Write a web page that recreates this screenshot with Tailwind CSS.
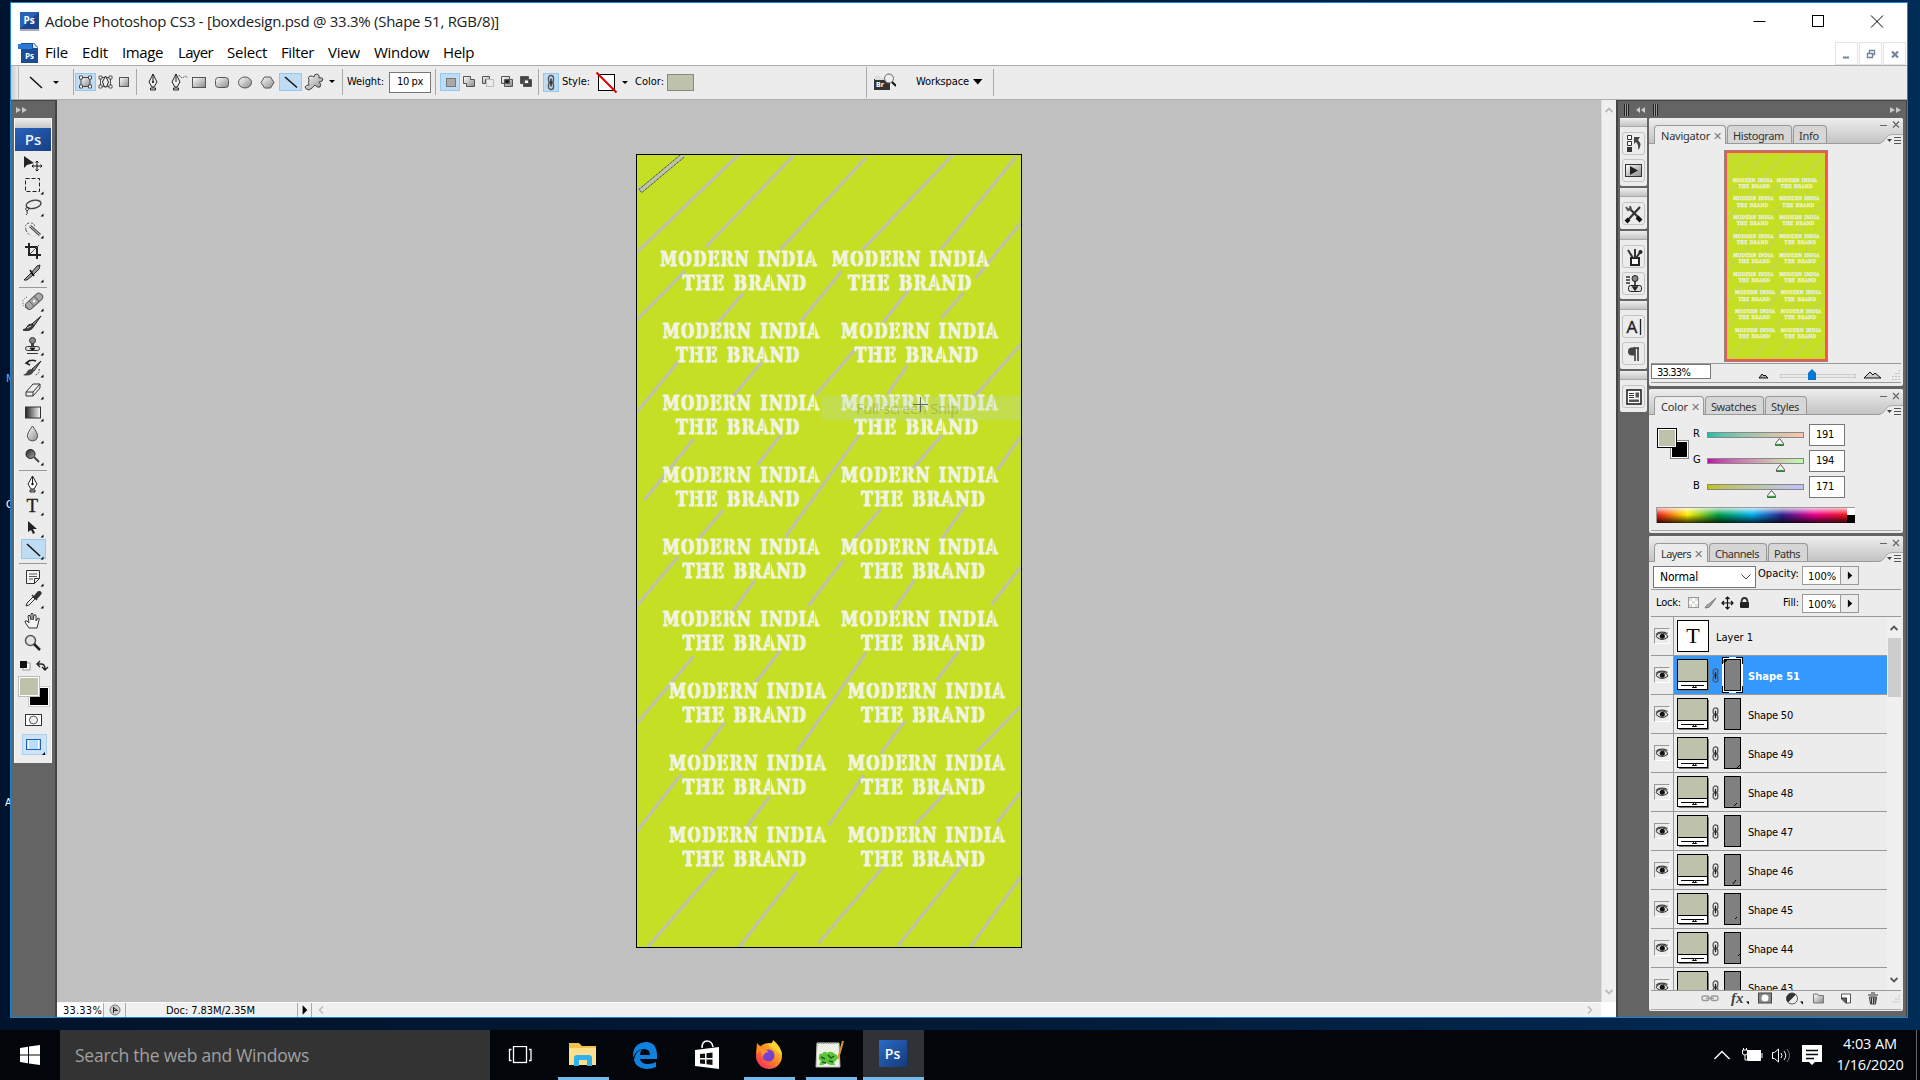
<!DOCTYPE html>
<html lang="en">
<head>
<meta charset="utf-8">
<title>Adobe Photoshop CS3</title>
<script src="https://cdn.jsdelivr.net/npm/@tailwindcss/browser@4"></script>
</head>
<body class="relative w-[1920px] h-[1080px] overflow-hidden bg-linear-to-r from-[#00132c] via-[#001a38] to-[#002c58] font-['DejaVu_Sans_Condensed','DejaVu_Sans',sans-serif] text-[11px] text-black">

<svg class="absolute size-0">
  <defs>
    <linearGradient id="gray" x1="0" y1="0" x2="1" y2="1"><stop offset="0" stop-color="#fff"/><stop offset="1" stop-color="#8a8a8a"/></linearGradient>
    <linearGradient id="bw"><stop offset="0" stop-color="#222"/><stop offset="1" stop-color="#fff"/></linearGradient>
    <linearGradient id="dk" x1="0" y1="0" x2="1" y2="1"><stop offset="0" stop-color="#222"/><stop offset="1" stop-color="#aaa"/></linearGradient>
    <linearGradient id="ff" x1="1" y1="0" x2="0" y2="1"><stop offset="0" stop-color="#ffe14a"/><stop offset=".45" stop-color="#ff8a1f"/><stop offset="1" stop-color="#f5156c"/></linearGradient>
    <symbol id="chain" viewBox="0 0 8 16"><g fill="none" stroke="#555" stroke-width="1.4"><rect x="1.5" y="1" width="5" height="7" rx="2.5"/><rect x="1.5" y="8" width="5" height="7" rx="2.5"/><path d="M4 4v8" stroke="#222"/></g></symbol>
    <symbol id="eye" viewBox="0 0 14 12"><path d="M1 6.5Q3 2.5 7.5 3T13 7Q10 9.500 7 9.500T1 6.500z" fill="#ddd" stroke="#333" stroke-width="1"/><circle cx="7.300" cy="6.300" r="2.500" fill="#111"/><path d="M1 4.500Q5 .5 12.500 3.500" stroke="#444" fill="none" stroke-width="1.200"/></symbol>
    <symbol id="arrR" viewBox="0 0 12 8"><path d="M0 1l5 3-5 3zM6 1l5 3-5 3z" fill="#c8c8c8"/></symbol>
    <symbol id="flyout" viewBox="0 0 24 10"><path d="M0 10Q4 9 7 4 9 .5 13 .5H24V10z" fill="#ececec"/><path d="M0 9.500Q4 9 7 4 9 .5 13 .5H24" fill="none" stroke="#aaa"/><path d="M8 5h5l-2.500 3z" fill="#444"/><path d="M15 3.500h7M15 6.500h7M15 9.500h7" stroke="#555"/></symbol>
  </defs>
</svg>

<!-- desktop labels partly behind the window -->
<div class="absolute left-[6px] top-[371px] text-[#6bb0e8] leading-4">M</div>
<div class="absolute left-[6px] top-[497px] text-white leading-4">C</div>
<div class="absolute left-[5px] top-[795px] text-white leading-4">A</div>

<!-- application window -->
<div class="absolute left-[10px] top-[2px] w-[1898px] h-[1016px] border border-[#1883d7] bg-white flex flex-col">
  <div class="h-[37px] shrink-0 flex items-center text-[15px] text-[#222] font-['Open_Sans',sans-serif]">
    <svg class="ml-[9px] w-[19px] h-[19px]" viewBox="0 0 19 19"><rect width="19" height="17" fill="#2a62b8"/><path d="M0 17L19 0v17z" fill="#1c4590"/><rect y="17" width="19" height="2" fill="#aab"/><text x="3.500" y="12" font-size="10" font-weight="bold" fill="#fff" font-family="Open Sans">Ps</text></svg>
    <span class="ml-[6px] whitespace-nowrap" data-w="454">Adobe Photoshop CS3 - [boxdesign.psd @ 33.3% (Shape 51, RGB/8)]</span>
    <svg class="ml-auto mr-[22px] w-[132px] h-[14px]" viewBox="0 0 132 14" fill="none" stroke="#000"><path d="M.5 6.500h12M118 .5l12 12M130 .5l-12 12"/><rect x="59.500" y=".5" width="11" height="11"/></svg>
  </div>
  <div class="h-[25px] shrink-0 flex items-center text-[15px] font-['Open_Sans',sans-serif]">
    <svg class="ml-[7px] w-[20px] h-[20px]" viewBox="0 0 20 20"><path d="M3 0h13l4 4v16H3z" fill="#1c4c94"/><path d="M0 1h14v5H0z" fill="#2a79d8"/><path d="M15 0v5h5z" fill="#dde6f2"/><text x="7" y="16" font-size="8" font-weight="bold" fill="#fff" font-family="Open Sans">Ps</text></svg>
    <div class="flex ml-[7px] whitespace-nowrap">
      <span class="w-[37px]"><span data-w="23">File</span></span><span class="w-[40px]"><span data-w="26">Edit</span></span><span class="w-[56px]"><span data-w="41">Image</span></span><span class="w-[49px]"><span data-w="35">Layer</span></span><span class="w-[54px]"><span data-w="40">Select</span></span><span class="w-[47px]"><span data-w="33">Filter</span></span><span class="w-[46px]"><span data-w="32">View</span></span><span class="w-[69px]"><span data-w="55">Window</span></span><span data-w="31">Help</span>
    </div>
    <div class="ml-auto flex gap-px mr-px mt-[2px]">
      <div class="size-[23px] border border-[#e4e4e4]"><svg viewBox="0 0 21 21"><path d="M7 14.500h6" stroke="#72859b" stroke-width="2"/></svg></div>
      <div class="size-[23px] border border-[#e4e4e4]"><svg viewBox="0 0 21 21"><path d="M7.500 10.500h5v4h-5zM9.500 10V7.500h5v4H13" stroke="#72859b" fill="none" stroke-width="1.400"/></svg></div>
      <div class="size-[23px] border border-[#e4e4e4]"><svg viewBox="0 0 21 21"><path d="M8 8.500l6 6M14 8.500l-6 6" stroke="#72859b" stroke-width="2.200"/></svg></div>
    </div>
  </div>

  <!-- options bar -->
  <div class="h-[35px] shrink-0 bg-[#ececec] border-y border-[#adadad] flex items-center pb-px whitespace-nowrap [&>svg]:shrink-0">
    <div class="w-[8px] h-[33px] mb-[-1px] bg-linear-to-r from-[#c8c8c8] to-[#eee] border-r border-[#bbb]"></div>
    <svg class="w-[54px] h-[33px]" viewBox="0 0 54 33"><path d="M11 11l12 11" stroke="#111" stroke-width="1.500"/><path d="M34 15h6l-3 3z"/></svg>
    <div class="w-px h-[26px] bg-[#aaa]"></div>
    <div class="w-[21px] h-[18px] ml-[1px] bg-[#c0dcf3] border border-[#90c8f6]"><svg viewBox="0 0 19 16"><path d="M5 3.500h9v9H5z" fill="url(#gray)" stroke="#444"/><path d="M3.500 2h3v3h-3zM12.500 2h3v3h-3zM3.500 11h3v3h-3zM12.500 11h3v3h-3z" fill="#fff" stroke="#333" stroke-width=".8"/></svg></div>
    <svg class="w-[19px] h-[18px]" viewBox="0 0 19 18"><path d="M4.500 4.500h10v9h-10z" fill="none" stroke="#555"/><path d="M3 3h3v3H3zM13 3h3v3h-3zM3 12h3v3H3zM13 12h3v3h-3z" fill="#fff" stroke="#333" stroke-width=".8"/><path d="M9.500 3l3 6-2 5h-2l-2-5z" fill="#eee" stroke="#222"/></svg>
    <svg class="w-[20px] h-[18px]" viewBox="0 0 20 18"><rect x="4.500" y="4.500" width="9" height="9" fill="url(#gray)" stroke="#555"/></svg>
    <div class="w-px h-[26px] bg-[#aaa] ml-px"></div>
    <svg class="w-[32px] h-[22px]" viewBox="0 0 32 22"><path d="M16 3l4 8-3 5h-2l-3-5zM16 3v8M13.500 17h5v2h-5z" fill="#eee" stroke="#222"/><circle cx="16" cy="11" r="1"/></svg>
    <svg class="w-[22px] h-[22px]" viewBox="0 0 22 22"><path d="M7 3l4 8-3 5H6l-3-5zM7 3v8M4.500 17h5v2h-5z" fill="#eee" stroke="#222"/><path d="M10 4q2 4 5 2t3 1" fill="none" stroke="#444" stroke-dasharray="1.500 1"/></svg>
    <svg class="w-[87px] h-[22px]" viewBox="0 0 87 22" fill="url(#gray)" stroke="#555"><rect x="1.500" y="6.500" width="13" height="10"/><rect x="24.500" y="6.500" width="13" height="10" rx="3"/><ellipse cx="54" cy="11.500" rx="6.500" ry="5.500"/><path d="M73.500 6h6l3.500 5.500-3.500 5.500h-6L70 11.500z"/></svg>
    <div class="w-[23px] h-[18px] ml-[1px] bg-[#c0dcf3] border border-[#90c8f6]"><svg viewBox="0 0 21 16"><path d="M5 3l12 10.500" stroke="#111" stroke-width="1.500"/></svg></div>
    <svg class="w-[40px] h-[22px]" viewBox="0 0 40 22"><path d="M7 9q-2-3 1-4 3 0 4 1 0-3 3-3 3 1 2 4 3-1 4 1 0 3-4 3 3 2 1 5-3 1-5-2-2 3-6 5-4-1-4-3 1-2 4-2-1-2 0-5z" fill="url(#gray)" stroke="#444"/><path d="M27 9h6l-3 3z"/></svg>
    <div class="w-px h-[26px] bg-[#aaa]"></div>
    <span class="ml-[4px] w-[42px]"><span data-w="37">Weight:</span></span>
    <div class="w-[42px] h-[21px] mb-[-1px] bg-white border border-[#777] flex items-center justify-center"><span data-w="26">10 px</span></div>
    <div class="w-px h-[26px] bg-[#aaa] ml-[4px]"></div>
    <div class="w-[20px] h-[18px] ml-[4px] bg-[#c0dcf3] border border-[#90c8f6]"><svg viewBox="0 0 18 16"><rect x="5.500" y="4.500" width="9" height="8" fill="#aaa" stroke="#777"/></svg></div>
    <svg class="w-[77px] h-[18px]" viewBox="0 0 77 18" stroke="#555" fill="url(#gray)"><path d="M3.500 3.500h7v3h4v7h-8v-3h-3z"/><path d="M22.500 10.500v-7h7v3h-4v4z"/><path d="M26.500 6.500h7v7h-7z" fill="none" stroke="#bbb"/><path d="M41.500 3.500h8v7h-8zM44.500 6.500h8v7h-8z"/><path d="M45 7h4v3h-4z" fill="#000"/><path d="M60.500 3.500h8v7h-8zM63.500 6.500h8v7h-8z" fill="#444"/><path d="M64.500 7h4v3.500h-4z" fill="#fff"/></svg>
    <div class="w-px h-[26px] bg-[#aaa] ml-[1px]"></div>
    <div class="w-[16px] h-[19px] ml-[4px] bg-[#c0dcf3] border border-[#90c8f6] flex justify-center"><svg class="w-[8px] h-[17px]"><use href="#chain"/></svg></div>
    <span class="ml-[3px] w-[34px]"><span data-w="28">Style:</span></span>
    <svg class="w-[36px] h-[24px]" viewBox="0 0 36 24"><rect x="2.500" y="4.500" width="16" height="16" fill="#fff" stroke="#000"/><path d="M.5 2.500l20 20" stroke="#e00000" stroke-width="2"/><path d="M26 11h6l-3 3z"/></svg>
    <span class="ml-[3px] w-[32px]"><span data-w="29">Color:</span></span>
    <div class="w-[27px] h-[17px] bg-[#bfc2ab] border border-[#888]"></div>
    <div class="w-px h-[31px] bg-[#aaa] ml-[172px]"></div>
    <svg class="w-[22px] h-[18px] ml-[7px]" viewBox="0 0 22 18"><path d="M0 6h16v11H0z" fill="#333"/><path d="M1 3h5l1 2h9v2H1z" fill="#ddd"/><circle cx="15" cy="5.500" r="4.500" fill="#eee" stroke="#666"/><path d="M18 9l4 4" stroke="#111" stroke-width="2"/><text x="2" y="14" font-size="7" font-weight="bold" fill="#fff">Br</text></svg>
    <span class="ml-[20px] w-[57px]"><span data-w="53">Workspace</span></span>
    <svg class="w-[10px] h-[6px]" viewBox="0 0 10 6"><path d="M0 0h9.500L4.800 5.500z"/></svg>
    <div class="w-px h-[27px] bg-[#aaa] ml-[10px]"></div>
  </div>

  <div class="flex-1 min-h-0 flex">
    <!-- tool dock -->
    <div class="w-[46px] shrink-0 bg-[#646464] border-r-2 border-t border-[#444] flex flex-col pl-[3px]">
      <svg class="w-[12px] h-[8px] ml-[2px] mt-[5px] mb-[4px] shrink-0"><use href="#arrR"/></svg>
      <div class="w-[38px] h-[645px] bg-[#ececec] border-x border-[#f8f8f8] flex flex-col">
        <div class="h-[10px] bg-linear-to-b from-[#eee] to-[#c8c8c8] shrink-0"></div>
        <div class="h-[23px] shrink-0 bg-linear-to-br from-[#2a62bc] to-[#173f86] text-[#e8f2ff] text-[15px] font-semibold font-['Open_Sans',sans-serif] flex items-center justify-center">Ps</div>
        <div id="tools" class="flex flex-col items-center pt-px"></div>
        <svg class="w-[36px] h-[108px]" viewBox="15 654 36 108">
          <rect x="23" y="663" width="7" height="7" fill="#fff" stroke="#999"/><rect x="20" y="661" width="7" height="7" fill="#111"/>
          <path d="M38 664h3q4 0 4 5M40 661l-3 3 3 3M42 667l3 3 3-3" fill="none" stroke="#222" stroke-width="1.400"/>
          <rect x="28.500" y="686.500" width="21" height="20" fill="#000" stroke="#ccc"/><rect x="29.500" y="687.500" width="19" height="18" fill="none" stroke="#fff"/>
          <rect x="18.500" y="676.500" width="21" height="20" fill="#fff" stroke="#bbb"/><rect x="20" y="678" width="18" height="17" fill="#bfc2ab"/>
          <rect x="25.500" y="714.500" width="16" height="11" fill="#fff" stroke="#333"/><circle cx="33.500" cy="720" r="4" fill="#eee" stroke="#555"/>
          <rect x="22.500" y="734.500" width="24" height="20" fill="#cfe3f5" stroke="#a8d0f0"/><rect x="26.500" y="739.500" width="14" height="10" fill="#b9dcff" stroke="#1565c0"/><path d="M28.500 740v9M38.500 740v9" stroke="#fff"/><path d="M45 752v3h-3z"/>
        </svg>
      </div>
    </div>

    <!-- document area -->
    <div class="flex-1 min-w-0 flex flex-col">
      <div class="flex-1 min-h-0 flex">
        <div class="flex-1 bg-[#c0c0c0] pl-[579px] pt-[54px]">
          <svg class="w-[386px] h-[794px]" viewBox="0 0 386 794"><g class="artwork"></g>
            <g transform="translate(-11 -9) scale(.3333)"><path d="M42 133L168 28M50 143L178 36M42 133l8 10" stroke="#2a2f9a" stroke-width="3" stroke-dasharray="4 2" fill="none"/></g>
            <rect x="186" y="242" width="199" height="24" fill="#bcdcb0" opacity=".3"/>
            <text x="220" y="260" font-size="14.500" fill="#8fa321" opacity=".5" font-family="Open Sans" textLength="103">Full-screen Snip</text>
            <path d="M277 250.500h15M284.500 243v15" stroke="#5f6f50"/>
            <rect x=".5" y=".5" width="385" height="793" fill="none" stroke="#000"/>
          </svg>
        </div>
        <div class="w-[15px] bg-[#f0f0f0] border-l border-[#ddd] flex flex-col justify-between items-center py-[7px]">
          <svg class="w-[8px] h-[6px]" viewBox="0 0 8 6"><path d="M.5 5L4 1.500 7.500 5" fill="none" stroke="#bbb" stroke-width="1.800"/></svg>
          <svg class="w-[8px] h-[6px]" viewBox="0 0 8 6"><path d="M.5 1L4 4.500 7.500 1" fill="none" stroke="#bbb" stroke-width="1.800"/></svg>
        </div>
      </div>
      <div class="h-[15px] flex items-center bg-[#f0f0f0] border-t border-[#fafafa]">
        <div class="w-[47px] h-full bg-white border-r border-[#aaa] pl-[6px] leading-[16px]"><span data-w="39">33.33%</span></div>
        <div class="w-[22px] h-full border-r border-[#aaa] flex justify-center items-center"><svg class="w-[12px] h-[12px]" viewBox="0 0 12 12"><circle cx="6" cy="6" r="5" fill="#ccc" stroke="#777"/><path d="M4.500 3v6M4.500 3.500l4 3-4 0" stroke="#222" fill="none"/></svg></div>
        <div class="w-[172px] h-full border-r border-[#aaa] pl-[40px] leading-[16px]"><span data-w="89">Doc: 7.83M/2.35M</span></div>
        <svg class="w-[14px] h-[14px] border-r border-[#aaa]" viewBox="0 0 14 14"><path d="M5 2l5 5-5 5z"/></svg>
        <svg class="w-[6px] h-[8px] ml-[6px]" viewBox="0 0 6 8"><path d="M5 .5L1.500 4 5 7.500" fill="none" stroke="#bbb" stroke-width="1.500"/></svg>
        <svg class="w-[6px] h-[8px] ml-auto mr-[8px]" viewBox="0 0 6 8"><path d="M1 .5L4.500 4 1 7.500" fill="none" stroke="#bbb" stroke-width="1.500"/></svg>
        <div class="w-[15px] h-full bg-white"></div>
      </div>
    </div>

    <!-- panel dock -->
    <div class="w-[291px] shrink-0 bg-[#646464] border-l-2 border-r border-t border-[#444] flex flex-col">
      <div class="h-[17px] shrink-0 flex items-center px-[6px]">
        <svg class="w-[36px] h-[12px]" viewBox="0 0 36 12"><path d="M.5 0v12M2.500 0v12M4.500 0v12M29.500 0v12M31.500 0v12M33.500 0v12" stroke="#222"/><path d="M1.500 0v12M3.500 0v12M30.500 0v12M32.500 0v12" stroke="#999"/><path d="M16 3l-4 3 4 3zM21 3l-4 3 4 3z" fill="#ccc"/></svg>
        <svg class="w-[12px] h-[8px] ml-auto mr-[-2px]"><use href="#arrR"/></svg>
      </div>
      <div class="flex flex-1 min-h-0">
        <div id="strip" class="w-[27px] ml-[2px] flex flex-col gap-[2px]"></div>
        <div class="w-[254px] ml-[2px] flex flex-col gap-[3px]">

          <!-- navigator -->
          <div class="h-[268px] bg-[#ececec] rounded-[2px] flex flex-col">
            <div class="h-[26px] shrink-0 bg-linear-to-b from-[#eee] to-[#c4c4c4] border-b border-[#9a9a9a] rounded-t-[2px] flex items-end pl-[5px] gap-px font-['Noto_Sans',sans-serif] text-[#333]">
              <div class="w-[72px] h-[19px] mb-[-1px] bg-[#ececec] border border-b-0 border-[#999] rounded-t-[4px] pl-[6px] leading-[20px] whitespace-nowrap flex gap-[3px]"><span data-w="49">Navigator</span><span class="text-[#777]">✕</span></div>
              <div class="w-[65px] h-[18px] bg-[#d6d6d6] border border-b-0 border-[#999] rounded-t-[4px] pl-[5px] leading-[20px]"><span data-w="51">Histogram</span></div>
              <div class="w-[34px] h-[18px] bg-[#d6d6d6] border border-b-0 border-[#999] rounded-t-[4px] pl-[5px] leading-[20px]"><span data-w="20">Info</span></div>
              <svg class="w-[24px] h-[26px] ml-auto mb-[-1px]" viewBox="0 0 24 26"><path d="M1 7.500h7M14 3.500l6 6M20 3.500l-6 6" stroke="#666" stroke-width="1.200"/><use href="#flyout" y="16" width="24" height="10"/></svg>
            </div>
            <div class="flex-1 flex justify-center pt-[6px] pr-[1px]"><div class="w-[104px] h-[212px] border border-[#888] bg-[#ff5050] p-[2px]"><svg class="w-[98px] h-[206px]" viewBox="2 2 382 790" preserveAspectRatio="none"><g class="artwork"></g></svg></div></div>
            <div class="h-[20px] mx-[2px] border-t border-[#999] border-b flex items-start">
              <div class="w-[60px] h-[15px] bg-white border border-[#777] pl-[5px] leading-[16px]"><span data-w="33">33.33%</span></div>
              <svg class="w-[190px] h-[16px]" viewBox="1711 365 190 16"><path d="M1759 379l3-4 2 2 1-1 3 3z" fill="#aaa" stroke="#111"/><rect x="1780.500" y="375.500" width="75" height="3" fill="#e7eaea" stroke="#ccc"/><path d="M1808 381v-7l4-4 4 4v7z" fill="#0078d7"/><path d="M1864 379l6-6 3 3 2-2 6 5z" fill="#ccc" stroke="#111"/><path d="M1899 371v10M1896 374v7M1893 377v4" stroke="#999" stroke-dasharray="1 2"/></svg>
            </div>
            <div class="h-[3px]"></div>
          </div>

          <!-- color -->
          <div class="h-[144px] bg-[#ececec] rounded-[2px] flex flex-col">
            <div class="h-[26px] shrink-0 bg-linear-to-b from-[#eee] to-[#c4c4c4] border-b border-[#9a9a9a] rounded-t-[2px] flex items-end pl-[5px] gap-px font-['Noto_Sans',sans-serif] text-[#333]">
              <div class="w-[50px] h-[19px] mb-[-1px] bg-[#ececec] border border-b-0 border-[#999] rounded-t-[4px] pl-[6px] leading-[19px] whitespace-nowrap flex gap-[3px]"><span data-w="27">Color</span><span class="text-[#777]">✕</span></div>
              <div class="w-[59px] h-[18px] bg-[#d6d6d6] border border-b-0 border-[#999] rounded-t-[4px] pl-[5px] leading-[19px]"><span data-w="45">Swatches</span></div>
              <div class="w-[42px] h-[18px] bg-[#d6d6d6] border border-b-0 border-[#999] rounded-t-[4px] pl-[5px] leading-[19px]"><span data-w="28">Styles</span></div>
              <svg class="w-[24px] h-[26px] ml-auto mb-[-1px]" viewBox="0 0 24 26"><path d="M1 7.500h7M14 4l6 6M20 4l-6 6" stroke="#666" stroke-width="1.200"/><use href="#flyout" y="16" width="24" height="10"/></svg>
            </div>
            <div class="flex h-[85px] pt-[9px] pl-[8px] shrink-0">
              <svg class="w-[36px] h-[36px]" viewBox="0 0 36 36"><rect x="13.500" y="16.500" width="18" height="18" fill="#000" stroke="#888"/><rect x="14.500" y="17.500" width="16" height="16" fill="none" stroke="#fff"/><rect x=".5" y="4.500" width="19" height="19" fill="#bfc2ab" stroke="#000"/><rect x="1.500" y="5.500" width="17" height="17" fill="none" stroke="#fff"/></svg>
              <div class="flex flex-col gap-[4px]">
                <div class="flex h-[22px]"><span class="w-[14px] leading-[20px]">R</span>
                  <div class="w-[97px] pt-[8px]"><div class="h-[6px] border border-[#888] bg-linear-to-r from-[#00c2ab] to-[#ffc2ab]"></div><svg class="w-[9px] h-[8px] ml-[68px]" viewBox="0 0 9 8"><path d="M4.500.5l4 5v2h-8v-2z" fill="#fff" stroke="#555"/><path d="M1 6.500h7" stroke="#3a3" stroke-width="1.500"/></svg></div>
                  <div class="w-[36px] h-[22px] ml-[5px] bg-white border border-[#777] pl-[6px] leading-[19px]"><span data-w="18">191</span></div></div>
                <div class="flex h-[22px]"><span class="w-[14px] leading-[20px]">G</span>
                  <div class="w-[97px] pt-[8px]"><div class="h-[6px] border border-[#888] bg-linear-to-r from-[#bf00ab] to-[#bfffab]"></div><svg class="w-[9px] h-[8px] ml-[69px]" viewBox="0 0 9 8"><path d="M4.500.5l4 5v2h-8v-2z" fill="#fff" stroke="#555"/><path d="M1 6.500h7" stroke="#3a3" stroke-width="1.500"/></svg></div>
                  <div class="w-[36px] h-[22px] ml-[5px] bg-white border border-[#777] pl-[6px] leading-[19px]"><span data-w="18">194</span></div></div>
                <div class="flex h-[22px]"><span class="w-[14px] leading-[20px]">B</span>
                  <div class="w-[97px] pt-[8px]"><div class="h-[6px] border border-[#888] bg-linear-to-r from-[#bfc200] to-[#bfc2ff]"></div><svg class="w-[9px] h-[8px] ml-[60px]" viewBox="0 0 9 8"><path d="M4.500.5l4 5v2h-8v-2z" fill="#fff" stroke="#555"/><path d="M1 6.500h7" stroke="#3a3" stroke-width="1.500"/></svg></div>
                  <div class="w-[36px] h-[22px] ml-[5px] bg-white border border-[#777] pl-[6px] leading-[19px]"><span data-w="18">171</span></div></div>
              </div>
            </div>
            <div class="flex ml-[7px] mt-[7px] w-[199px] h-[16px] border-t border-l border-[#999]">
              <div class="w-[190px] bg-[linear-gradient(to_bottom,rgba(255,255,255,.75),transparent_45%,rgba(0,0,0,.8)),linear-gradient(to_right,#f01818,#fff000_16%,#00a040_32%,#00b0f0_50%,#302090_66%,#f00090_83%,#f01818)]"></div>
              <div class="w-[8px] bg-[linear-gradient(#fff_50%,#000_50%)]"></div>
            </div>
            <div class="mt-[7px] mx-[2px] h-px bg-[#aaa]"></div>
          </div>

          <!-- layers -->
          <div class="h-[475px] bg-[#ececec] rounded-[2px] flex flex-col">
            <div class="h-[26px] shrink-0 bg-linear-to-b from-[#eee] to-[#c4c4c4] border-b border-[#9a9a9a] rounded-t-[2px] flex items-end pl-[5px] gap-px font-['Noto_Sans',sans-serif] text-[#333]">
              <div class="w-[54px] h-[19px] mb-[-1px] bg-[#ececec] border border-b-0 border-[#999] rounded-t-[4px] pl-[6px] leading-[19px] whitespace-nowrap flex gap-[3px]"><span data-w="30">Layers</span><span class="text-[#777]">✕</span></div>
              <div class="w-[58px] h-[18px] bg-[#d6d6d6] border border-b-0 border-[#999] rounded-t-[4px] pl-[5px] leading-[19px]"><span data-w="44">Channels</span></div>
              <div class="w-[40px] h-[18px] bg-[#d6d6d6] border border-b-0 border-[#999] rounded-t-[4px] pl-[5px] leading-[19px]"><span data-w="26">Paths</span></div>
              <svg class="w-[24px] h-[26px] ml-auto mb-[-1px]" viewBox="0 0 24 26"><path d="M1 7.500h7M14 4l6 6M20 4l-6 6" stroke="#666" stroke-width="1.200"/><use href="#flyout" y="16" width="24" height="10"/></svg>
            </div>
            <div class="h-[28px] shrink-0 mx-[2px] pl-[2px] pt-[4px] border-b border-[#999] flex">
              <div class="w-[103px] h-[22px] bg-white border border-[#777] pl-[6px] pr-[4px] flex items-center justify-between text-[12px]"><span data-w="38">Normal</span><svg class="w-[10px] h-[6px]" viewBox="0 0 10 6"><path d="M.5.5L5 5 9.500.5" fill="none" stroke="#444"/></svg></div>
              <span class="ml-[2px] w-[44px] leading-[16px]"><span data-w="41">Opacity:</span></span>
              <div class="w-[57px] h-[19px] border border-[#999] bg-white flex"><span class="w-[39px] pl-[5px] leading-[19px] border-r border-[#999]"><span data-w="28">100%</span></span><svg class="w-[17px] h-[17px] bg-[#ececec]" viewBox="0 0 17 17"><path d="M7 4.500l4.500 4L7 12.500z"/></svg></div>
            </div>
            <div class="h-[27px] shrink-0 mx-[2px] pl-[5px] pt-[4px] border-b border-[#999] flex">
              <span class="w-[31px] leading-[17px]"><span data-w="25">Lock:</span></span>
              <svg class="w-[66px] h-[16px] mt-px" viewBox="0 0 66 16"><rect x="1.500" y="2.500" width="10" height="10" fill="#fff" stroke="#999"/><path d="M2 3h3v3H2zM8 3h3v3H8zM5 6h3v3H5zM2 9h3v3H2zM8 9h3v3H8z" fill="#ddd"/><path d="M29 3l-7 6q-3 1-4 4 5 0 6-3z" fill="#aaa" stroke="#777"/><path d="M40.500 2v12M35 8h11M38.500 4l2-2 2 2M38.500 12l2 2 2-2M37 6l-2 2 2 2M44 6l2 2-2 2" stroke="#111" fill="none" stroke-width="1.200"/><rect x="53" y="7" width="9" height="6" rx="1" fill="#222"/><path d="M54.500 7.500q0-4.500 3-4.500t3 4.500" fill="none" stroke="#333" stroke-width="1.800"/></svg>
              <span class="ml-[27px] w-[22px] leading-[17px] text-right pr-[3px]"><span data-w="16">Fill:</span></span>
              <div class="w-[57px] h-[19px] border border-[#999] bg-white flex"><span class="w-[39px] pl-[5px] leading-[19px] border-r border-[#999]"><span data-w="28">100%</span></span><svg class="w-[17px] h-[17px] bg-[#ececec]" viewBox="0 0 17 17"><path d="M7 4.500l4.500 4L7 12.500z"/></svg></div>
            </div>
            <div class="h-[374px] shrink-0 mx-[2px] flex border-b border-[#999]">
              <div id="layers" class="w-[236px] overflow-hidden"></div>
              <div class="w-[14px] bg-[#f0f0f0] flex flex-col items-center">
                <svg class="w-[8px] h-[6px] mt-[8px]" viewBox="0 0 8 6"><path d="M.5 5L4 1.500 7.500 5" fill="none" stroke="#555" stroke-width="1.800"/></svg>
                <div class="mt-[7px] w-[13px] h-[59px] bg-[#cdcdcd] shrink-0"></div>
                <svg class="w-[8px] h-[6px] mt-auto mb-[7px]" viewBox="0 0 8 6"><path d="M.5 1L4 4.500 7.500 1" fill="none" stroke="#555" stroke-width="1.800"/></svg>
              </div>
            </div>
            <svg class="w-[254px] h-[18px] shrink-0" viewBox="1649 990.5 254 18">
              <g fill="none" stroke="#999" stroke-width="1.300"><rect x="1702" y="995.500" width="7" height="4.500" rx="2"/><rect x="1711" y="995.500" width="7" height="4.500" rx="2"/><path d="M1706 997.800h8"/></g>
              <text x="1731" y="1002" font-size="15" font-style="italic" font-weight="bold" fill="#444" font-family="Liberation Serif">fx</text><path d="M1746 1001h3v3zM1800 1001h3v3z"/>
              <rect x="1758.500" y="992.500" width="13" height="10" fill="#888" stroke="#444"/><circle cx="1765" cy="997.500" r="3.500" fill="#fff"/>
              <circle cx="1792" cy="998" r="5.500" fill="#eee" stroke="#555"/><path d="M1788.100 1001.900a5.500 5.500 0 0 1 7.800-7.800z" fill="#333"/>
              <path d="M1813.500 1002.500v-9h4l1 1.500h5v7.500z" fill="url(#gray)" stroke="#777"/>
              <path d="M1841.500 993.500h9v9h-5l-4-4z" fill="#fff" stroke="#555"/><path d="M1841.500 997.500h5v5z" fill="#666" stroke="#333"/>
              <path d="M1869.500 996.500h7l-1 7h-5zM1868 994.500h10M1871 992.500h4M1871.500 997v6M1873.500 997v6M1875 997v5" fill="#ccc" stroke="#333"/>
              <path d="M1899 995v9M1896 998v6M1893 1001v3" stroke="#999" stroke-dasharray="1 2"/>
            </svg>
            <div class="mx-[2px] h-px bg-[#aaa]"></div>
          </div>
        </div>
      </div>
    </div>
  </div>
</div>

<!-- taskbar -->
<div class="absolute left-0 top-[1030px] w-[1920px] h-[50px] bg-[#02050a] flex font-['Open_Sans',sans-serif] text-white">
  <div class="w-[60px] flex items-center pl-[20px]"><svg class="w-[20px] h-[20px]" viewBox="0 0 20 20" fill="#fff"><path d="M0 3l8-1.200v7.700H0zM9 1.600L20 0v9.500H9zM0 10.500h8v7.700L0 17zM9 10.500h11V20L9 18.400z"/></svg></div>
  <div class="w-[430px] bg-[#333] text-[#a0a0a0] text-[17.5px] flex items-center pl-[15px] pt-px whitespace-nowrap"><span data-w="234">Search the web and Windows</span></div>
  <div class="w-[60px] flex items-center pl-[18px]"><svg class="w-[25px] h-[18px]" viewBox="0 0 25 18" fill="none" stroke="#fff"><rect x="5.500" y=".5" width="13" height="16" stroke-width="1.300"/><path d="M3.500 3.500h-2v11h2M21 3.500h2v11h-2" stroke-width="1.300"/></svg></div>
  <svg class="w-[314px] h-[50px]" viewBox="550 1030 314 50">
    <path d="M558 1077h51v3h-51zM744 1077h51v3h-51zM806 1077h51v3h-51z" fill="#76b9ed"/>
    <path d="M569 1043h10l3 3h14v19h-27z" fill="#f2c14e"/><path d="M569 1048h27v17h-27z" fill="#fde08d"/><path d="M574 1066v-8q0-3 3-3h12q3 0 3 3v8h-5v-6h-8v6z" fill="#2fb1ec"/>
    <path d="M633 1058q-1-15 13-16 11 0 11 14v3h-17q1 5 8 5 4 0 8-2v5q-4 2-10 2-10-1-12-9 1-8 8-11-2 3-2 6h10q0-6-6-6-8 0-11 9z" fill="#0f82e0"/>
    <path d="M695 1049l24-3v22l-24-3z" fill="#fff" transform="translate(0 1)"/><path d="M702 1048q0-7 5-7t6 6" fill="none" stroke="#fff" stroke-width="1.500"/><path d="M700 1054l5-.5v4.500h-5zM706.500 1053.300l6-.8v5.500h-6zM700 1059.500h5v4.500l-5-.5zM706.500 1059.500h6v5.500l-6-.8z" fill="#111"/>
    <circle cx="769" cy="1056" r="13" fill="url(#ff)"/><path d="M768 1045q5-2 5-5 8 6 9 15l-6-4z" fill="#ffd230"/><path d="M756 1054l1-11 6 6z" fill="#ff8a1f"/><circle cx="768.500" cy="1055.500" r="6" fill="#7b3fd0"/><path d="M760 1049q6 0 9 3-5 0-6 5z" fill="#ff9a2a"/>
    <path d="M817 1043h22l1 24h-24z" fill="#eef2e4" stroke="#bbb"/><path d="M818 1043h20" stroke="#888" stroke-dasharray="1 1.500" stroke-width="2"/><path d="M819 1056q0-3 3-2 2-4 5-1 4-3 8 1 4 1 2 5-1 3-3 3l1 3h-5l-4-2-3 2h-4l2-4q-3-1-2-5z" fill="#5cc53a"/><path d="M821 1057l4 2M828 1055l3 3 3-2M822 1062l4 1M829 1061l4 1" stroke="#1e5b1e" stroke-width="1.500" fill="none"/><path d="M843 1041l-5 18" stroke="#d9952e" stroke-width="2"/>
  </svg>
  <div class="w-[61px] bg-[#2f3338] border-b-[3px] border-[#76b9ed] flex justify-center pt-[10px] pr-[2px] ml-[-1px]"><div class="w-[28px] h-[27px] bg-linear-to-br from-[#2b6bc8] to-[#153a7c] text-center text-[14px] font-semibold leading-[27px]">Ps</div></div>
  <svg class="ml-auto w-[110px] h-[50px]" viewBox="1714 1030 110 50" fill="none" stroke="#fff">
    <path d="M1714.500 1059l7.500-7.500 7.500 7.500" stroke-width="1.400"/>
    <rect x="1747.500" y="1050.500" width="13" height="9.500" fill="#fff"/><path d="M1747 1050.500h13.500v10H1748v-3M1762 1053v5M1742.500 1050h5v3q0 2-2.500 2t-2.500-2zM1743.500 1048v2M1746.500 1048v2M1745 1055v5h2"/>
    <path d="M1772.500 1052.500h2l4-3.500v13l-4-3.500h-2z"/><path d="M1781 1053q2 2.500 0 5M1784 1051q3.500 4.500 0 9"/><path d="M1787 1049q5 6.500 0 13" stroke="#777"/>
    <path d="M1802 1045h20v17h-7l-3 3-3-3h-7z" fill="#fff" stroke="none"/><path d="M1806 1050.500h12M1806 1054.500h12M1806 1058.500h8" stroke="#02050a" stroke-width="1.300"/>
  </svg>
  <div class="w-[92px] flex flex-col items-center text-[14.5px] leading-[21px] pt-[3px]"><span data-w="54">4:03 AM</span><span data-w="67">1/16/2020</span></div>
  <div class="w-[4px] border-l border-[#666]"></div>
</div>

<script>
// Background strokes of the box design, [x1,y1,x2,y2] in thirds of a pixel
const upper = [[343,27,36,322],[506,32,242,306],[723,38,466,314],[985,28,713,314],[1173,35,949,312],[1187,234,1052,400],[180,378,36,524],[356,443,272,541],[650,378,528,528],[858,427,770,537],[1015,443,949,520],[159,651,36,801],[412,650,325,752],[695,608,569,754],[847,661,788,747],[1187,598,1049,754],[206,882,58,1066],[475,860,397,960],[708,863,481,1176],[960,860,858,977],[1187,875,1117,975],[295,1094,223,1180],[768,1091,673,1201],[1022,1080,951,1180],[174,32,46,138],[36,130,50,129]];
const lower = [[159,35,36,182],[390,106,324,198],[655,45,549,184],[868,106,806,195],[1187,66,1099,180],[206,334,36,535],[465,318,387,418],[723,324,516,619],[1004,314,935,406],[299,532,232,622],[840,528,767,625],[1183,487,1055,621],[168,688,36,859],[435,754,364,847],[716,690,610,842],[962,742,870,840],[1187,741,1114,835],[280,962,68,1207],[516,982,342,1207],[777,962,581,1195],[1015,956,819,1202],[1187,996,1035,1207]];
const seg = a => a.map(l => `M${l[0]} ${l[1]}L${l[2]} ${l[3]}`).join('');
const starts = [[105,172,620,668],[112,152,648,688],[112,152,648,688],[112,152,648,708],[112,172,648,708],[112,172,648,708],[132,172,668,708],[132,172,668,708],[132,172,668,708]];
let t = '';
starts.forEach((s, i) => {
  const y = 363 + 216 * i;
  [[s[0],y,0],[s[1],y+72,1],[s[2],y,0],[s[3],y+72,1]].forEach(([x, b, k]) => {
    t += `<text x="${x + 1}" y="${b}" textLength="${k ? 374 : 473}" lengthAdjust="spacingAndGlyphs">${k ? 'THE BRAND' : 'MODERN INDIA'}</text>`;
  });
});
const art = `<rect width="386" height="794" fill="#c5df25"/><g transform="translate(-11 -9) scale(.33333)"><g stroke="#bfc2ab" stroke-width="9.500" fill="none"><path d="${seg(upper)}"/><path transform="translate(0 1200)" d="${seg(lower)}"/></g><g font-family="DejaVu Serif" font-weight="bold" font-size="61" letter-spacing="5" word-spacing="6" fill="#f1f4df" stroke="#f1f4df" stroke-width="3.500">${t}</g><path class="cuts" stroke="#c5df25" stroke-width="3" opacity=".85"/></g>`;
document.querySelectorAll('.artwork').forEach(g => { g.innerHTML = art; });

// Stencil bridges: a vertical gap through each round or barred letter
const bridge = {O:.47, D:.45, E:.46, R:.43, B:.43, A:.56, H:.34};
function stencil() {
  document.querySelectorAll('.artwork').forEach(g => {
    let d = '';
    g.querySelectorAll('text').forEach(e => {
      [...e.textContent].forEach((c, i) => {
        if (!bridge[c]) return;
        const a = e.getStartPositionOfChar(i), b = e.getEndPositionOfChar(i);
        d += `M${a.x + (b.x - a.x) * bridge[c]} ${a.y - 48}v51`;
      });
    });
    g.querySelector('.cuts').setAttribute('d', d);
  });
}

// Tool palette icons on a 30x22 cell; the flag says whether a flyout corner is shown
const tools = [
 ['<path d="M6 4v12l3-3 7-2z" fill="#222"/><path d="M19 9v10M14 14h10M17.500 10.500L19 9l1.500 1.500M17.500 17.500L19 19l1.500-1.500M15.500 12.500L14 14l1.500 1.500M22.500 12.500L24 14l-1.500 1.500" stroke="#111" fill="none"/>',0],
 ['<rect x="7.500" y="4.500" width="14" height="13" fill="none" stroke="#222" stroke-dasharray="4 2"/>',1],
 ['<ellipse cx="15.500" cy="8.500" rx="7.500" ry="4" transform="rotate(-12 15 8)" fill="none" stroke="#444" stroke-width="1.400"/><path d="M9 11q-3 2 0 4 3-1 1-4M9 15q1 3-1 4" fill="none" stroke="#333"/>',1],
 ['<path d="M8 12q-2-7 4-7 6 0 4 5M8 12q2 5 5 5" fill="none" stroke="#555" stroke-dasharray="2 1.500"/><path d="M12 8l10 9" stroke="#444" stroke-width="3"/><path d="M12 8l10 9" stroke="#ddd"/>',1],
 ['<path d="M11 3v12h12M7 7h12v12" fill="none" stroke="#222" stroke-width="2"/><path d="M12 14l9-9" stroke="#555"/>',0],
 ['<path d="M22 3l-3 1-6 7 2 2 6-6zM13 11l-7 7h3l6-5z" fill="#999" stroke="#222"/><path d="M12 8l4 6" stroke="#111" stroke-width="1.500"/>',1],
 0,
 ['<g transform="rotate(-42 16 10)"><rect x="6" y="6.500" width="20" height="7.500" rx="3.500" fill="#aaa" stroke="#555"/><path d="M12.500 6.500v7.500M19.500 6.500v7.500" stroke="#666"/><circle cx="16" cy="10.200" r="1.200" fill="#fff"/></g><path d="M9 6q-5 2-4 7 1 4 5 4" fill="none" stroke="#444" stroke-dasharray="1 1.500"/>',1],
 ['<path d="M23 3l-9 8 2 2z" fill="#888" stroke="#222"/><path d="M14 11q-4 0-5 3-1 2-4 3 8 2 11-4z" fill="#444" stroke="#222"/><path d="M9 15l4-2" stroke="#ccc"/>',1],
 ['<circle cx="14.500" cy="5.500" r="3" fill="#888" stroke="#333"/><path d="M13 8h3v3h-3z" fill="#444"/><rect x="7.500" y="11.500" width="14" height="4" rx="2" fill="#ddd" stroke="#333"/><path d="M9 18.500h11M12 13h5l-2.500 3z" stroke="#333"/>',1],
 ['<path d="M23 4l-9 8 2 2z" fill="#888" stroke="#222"/><path d="M14 12q-4 0-5 3-1 2-4 3 8 2 11-4z" fill="#444"/><path d="M18 4q-6-2-9 2M12 3L8 6l4 2" fill="none" stroke="#222" stroke-width="1.500"/><path d="M21 12q1 5-4 6" fill="none" stroke="#333" stroke-dasharray="1.500 1.500"/>',1],
 ['<path d="M8 13l7-8h7l-7 8zM8 13v4h7v-4M15 17l7-8V5" fill="#eee" stroke="#333"/>',1],
 ['<rect x="7.500" y="6" width="15" height="11" fill="url(#bw)" stroke="#333"/>',1],
 ['<path d="M14.500 3q-6 8-5 11 1 4 5 4t5-4q1-3-5-11z" fill="url(#gray)" stroke="#555"/>',1],
 ['<circle cx="12.500" cy="9" r="4.500" fill="url(#dk)" stroke="#222"/><path d="M16 12l5 5" stroke="#444" stroke-width="2"/>',1],
 0,
 ['<path d="M14.500 3l4.500 8-3 5h-3l-3-5zM14.500 3v8" fill="#fff" stroke="#222"/><circle cx="14.500" cy="11" r="1.200"/><path d="M12 17h5v2h-5z" fill="#ccc" stroke="#222"/>',1],
 ['<text x="8.500" y="17" font-size="19" fill="#222" stroke="#222" stroke-width=".3" font-family="Liberation Serif">T</text>',1],
 ['<path d="M10 4v11l3-2 2 4 2-1-2-4h4z" fill="#222"/>',1],
 ['<rect x="3.500" y=".5" width="24" height="19" fill="#c0dcf3" stroke="#90c8f6"/><path d="M9 5l13 12" stroke="#111" stroke-width="1.500"/>',1],
 0,
 ['<path d="M8.500 4.500h13v8l-5 5h-8zM21 12.500h-4.500v5" fill="#f4f4f4" stroke="#333"/><path d="M11 8h8M11 10.500h8M11 13h4" stroke="#555"/>',1],
 ['<path d="M8 18l1-3 6-6 2 2-6 6z" fill="#eee" stroke="#333"/><path d="M14 7l5 5M16 9l4-5q2-1 3 1 0 1-5 6z" fill="#333" stroke="#333" stroke-width="1.500"/>',1],
 ['<path d="M11 18l-4-6q0-2 2-1l2 2-1-7q1-2 2 0l1 4V4q1-2 2 0v6l1-5q2-1 2 1v5l2-3q2 0 1 2l-2 8z" fill="#f4f4f4" stroke="#333"/>',0],
 ['<circle cx="12.500" cy="8.500" r="5" fill="#e4e4e4" stroke="#555" stroke-width="1.500"/><path d="M16 12l6 6" stroke="#222" stroke-width="2.500"/>',0]
];
document.getElementById('tools').innerHTML = tools.map((x, i) => x
  ? `<svg class="w-[30px] h-[22px]" viewBox="0 0 30 22">${x[0]}${x[1] ? '<path d="M25.500 17.500v3h-3z"/>' : ''}</svg>`
  : `<div class="${i === 6 ? 'h-[7px]' : i === 15 ? 'h-[6px]' : 'h-[5px]'} w-[28px] flex items-center"><div class="w-full h-px bg-[#999]"></div></div>`).join('');

// Collapsed panel icons
const strip = [
 ['<path d="M4.500 2.500h4v4h-4zM4.500 8.500h4v4h-4z" fill="#fff" stroke="#333"/><path d="M4 14h5v5H4z" fill="#333"/><path d="M11 4h6l-2 3q5 5 0 10 1-5-2-8l-2 2z" fill="#444"/>',
  '<rect x="2.500" y="4.500" width="16" height="12" fill="url(#gray)" stroke="#333"/><path d="M7 6v9l8-4.500z" fill="#222"/>'],
 ['<path d="M4 18L17 4M6 5l11 11" stroke="#333" stroke-width="2.200"/><path d="M14 14l4 4M3 19l3-3" stroke="#111" stroke-width="4"/><path d="M3 4l2 3 3-1-1-3" stroke="#555" stroke-width="2" fill="none"/>'],
 ['<rect x="8" y="12" width="8" height="7" fill="#fff" stroke="#222" stroke-width="2"/><path d="M10 12L5 4M12 12V3M13 12l5-7" stroke="#333" stroke-width="2"/><circle cx="17.500" cy="6" r="2" fill="#222"/>',
  '<path d="M3 4h4M3 7h4M3 10h4" stroke="#333" stroke-width="1.500"/><circle cx="12" cy="5.500" r="3" fill="#888" stroke="#222"/><rect x="5.500" y="12.500" width="13" height="6" rx="2" fill="#ddd" stroke="#222"/><path d="M12 8v4M10 14h4l-2 3z" stroke="#222" stroke-width="1.500"/>'],
 ['<text x="3.500" y="17" font-size="17" fill="#222" stroke="#222" stroke-width=".4" font-family="Open Sans">A</text><path d="M17.500 3v16" stroke="#222" stroke-width="1.300"/>',
  '<path d="M15 5v13M12 5v13M10 5h6" stroke="#333" stroke-width="1.500"/><path d="M12 4.500H9a4 4 0 0 0 0 8h3z" fill="#444"/>'],
 ['<rect x="4" y="4" width="14" height="14" fill="#fff" stroke="#222" stroke-width="1.600"/><path d="M6 7.500h5M6 9.500h5M6 11.500h5" stroke="#333"/><path d="M12.500 6.500H16v5h-3.500zM6 13.500h10v2.500H6z" fill="#555"/>']
];
document.getElementById('strip').innerHTML = strip.map(g => `<div class="bg-[#ececec] rounded-[2px] flex flex-col items-center pb-[4px]"><div class="w-full h-[9px] bg-linear-to-b from-[#eee] to-[#c4c4c4] border-b border-[#aaa] mb-[5px]"></div><div class="flex flex-col gap-[4px]">${g.map(p => `<div class="size-[23px] border border-[#c4c4c4] rounded-[3px]"><svg viewBox="0 0 21 21">${p}</svg></div>`).join('')}</div></div>`).join('');

// Layer list
const marks = {51:'M0 0h3L0 3z',49:'M13 30l3-3',48:'M10 29l3-3',46:'M9 29l3-4',45:'M11 25l2-2',44:'M14 23l2-2'};
let rows = '';
for (let n = 52; n >= 43; n--) {
  const sel = n === 51, text = n === 52;
  rows += `<div class="h-[39px] flex border-b border-[#999]">
    <div class="w-[23px] border-r border-[#999] pl-[3px] pt-[11px] shrink-0"><div class="w-[16px] h-[16px] border-t border-l border-[#999] border-r border-b border-r-white border-b-white"><svg class="w-[14px] h-[13px] pt-px"><use href="#eye"/></svg></div></div>
    <div class="${sel ? 'flex-1 flex bg-[#3399ff] text-white font-bold' : 'flex-1 flex'}">
    ${text ? `<div class="w-[32px] h-[32px] mt-[3px] ml-[3px] bg-white border border-black text-center text-[22px] leading-[30px] font-['Liberation_Serif',serif]">T</div><span class="ml-[7px] leading-[41px]"><span data-w="37">Layer 1</span></span>`
    : `<svg class="w-[72px] h-[38px]" viewBox="0 0 72 38"><path d="M5 34.500h29.500V5" fill="none" stroke="#777"/><rect x="3.500" y="3.500" width="30" height="30" fill="#fff" stroke="#000"/><rect x="4" y="4" width="29" height="21" fill="#bfc2ab"/><path d="M4 25.500h29M7 29.500h23" stroke="#000"/><path d="M18.500 31.500h4l-2-2.500z" fill="#fff" stroke="#000"/>
      <use href="#chain" x="37.500" y="12" width="8" height="15"/>
      ${sel ? '<rect x="48.500" y="1.500" width="20" height="35" fill="none" stroke="#fff"/><path d="M49 8V2h6M62 2h6v6M49 30v6h6M62 36h6v-6" fill="none" stroke="#000" stroke-width="2"/><rect x="49.500" y="2.500" width="18" height="33" fill="none" stroke="#fff"/>' : ''}
      <rect x="50.500" y="3.500" width="16" height="31" fill="#808080" stroke="#000"/><path transform="translate(50 4)" d="${marks[n] || ''}" stroke="#000"/></svg><span class="ml-[2px] leading-[41px]"><span data-w="${sel ? 52 : 45}">Shape ${n}</span></span>`}
    </div></div>`;
}
document.getElementById('layers').innerHTML = rows;

// Fit each label to its design width by tracking
function fit() {
  document.querySelectorAll('[data-w]').forEach(e => {
    e.style.display = 'inline-block';
    e.style.whiteSpace = 'nowrap';
    e.style.letterSpacing = '0px';
    const n = e.textContent.length, w = e.getBoundingClientRect().width;
    e.style.letterSpacing = ((+e.dataset.w - w) / n).toFixed(3) + 'px';
  });
  stencil();
}
fit();
window.addEventListener('load', () => { fit(); requestAnimationFrame(fit); setTimeout(fit, 150); });
</script>
</body>
</html>
